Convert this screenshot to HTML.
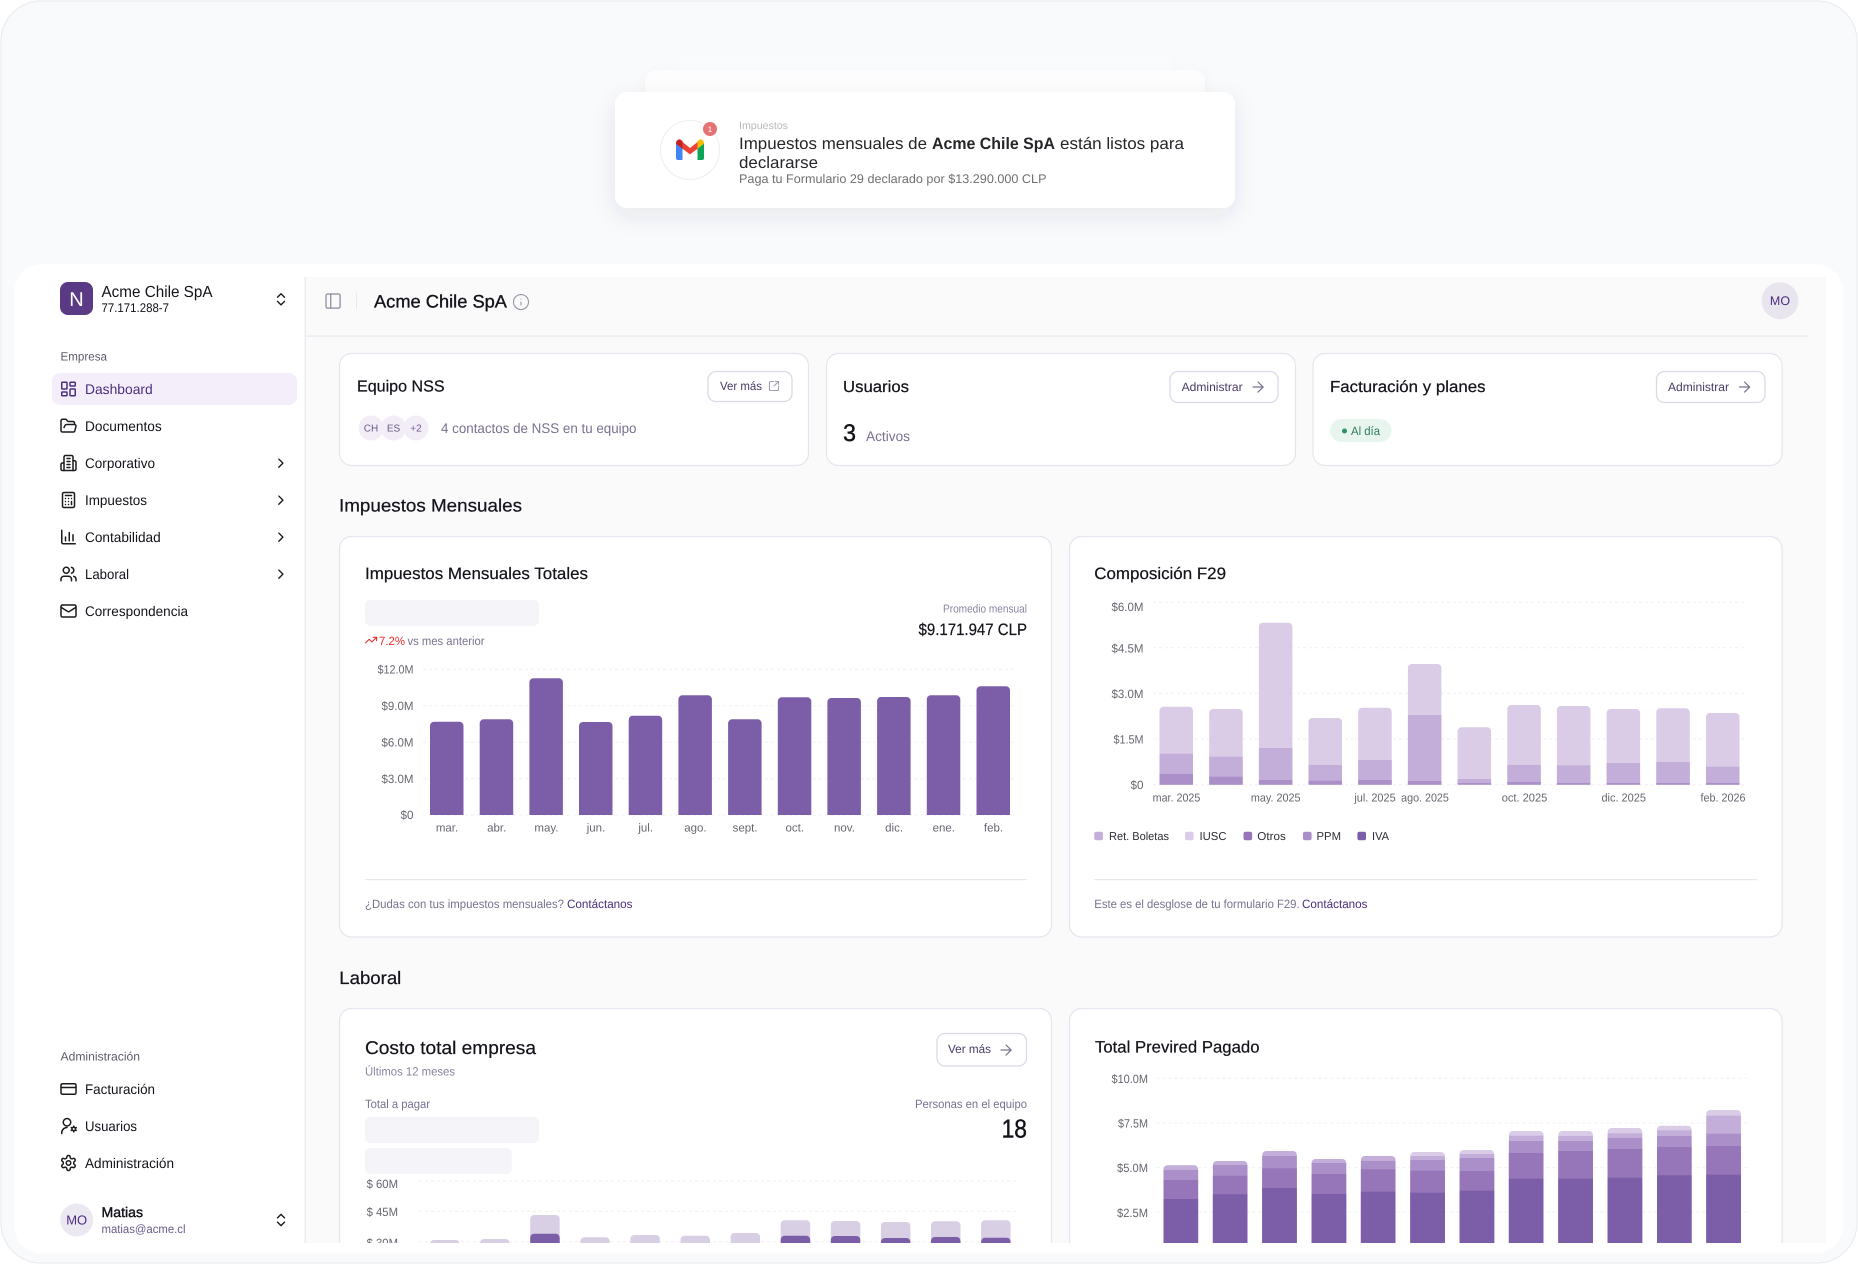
<!DOCTYPE html>
<html lang="es">
<head>
<meta charset="utf-8">
<title>Acme Chile SpA - Dashboard</title>
<style>
html,body{margin:0;padding:0;background:#fff;width:1858px;height:1264px;overflow:hidden}
svg{display:block}
text{font-family:"Liberation Sans",sans-serif;fill:#14121a}
.m{stroke:#14121a;stroke-width:.22}
.gr{fill:#7a7190}
.ax{fill:#666670}
.pu{fill:#4b2e7e}
.ic{fill:none;stroke:#1a1a1f;stroke-width:2;stroke-linecap:round;stroke-linejoin:round}
.card{fill:#fff;stroke:#e6e4ee;stroke-width:1.2}
.btn{fill:#fff;stroke:#dcd8e6;stroke-width:1.3}
.grid{stroke:#efeff4;stroke-width:1;stroke-dasharray:3 3}
.sk{fill:#f4f4f9}
</style>
</head>
<body>
<svg xmlns="http://www.w3.org/2000/svg" width="1858" height="1264" viewBox="0 0 1858 1264" text-rendering="geometricPrecision">
<defs>
<filter id="s1" x="-20%" y="-50%" width="140%" height="220%"><feDropShadow dx="0" dy="8" stdDeviation="11" flood-color="#2a2a50" flood-opacity=".09"/></filter>
<filter id="s2" x="-20%" y="-50%" width="140%" height="220%"><feDropShadow dx="0" dy="3" stdDeviation="6" flood-color="#2a2a50" flood-opacity=".03"/></filter>
<clipPath id="mc"><rect x="306" y="277" width="1520" height="966"/></clipPath>
</defs>

<!-- outer frame -->
<rect x="1" y="1" width="1856" height="1262" rx="40" fill="#f9fafc" stroke="#ebecf1" stroke-width="1.2"/>

<!-- notification stack -->
<rect x="678" y="54" width="494" height="70" rx="10" fill="#fafbfd"/>
<rect x="645" y="70" width="560" height="70" rx="11" fill="#fdfdfe" filter="url(#s2)"/>
<rect x="615" y="92" width="620" height="116" rx="12" fill="#fff" filter="url(#s1)"/>
<circle cx="690" cy="150" r="29.5" fill="#fff" stroke="#eeeeee" stroke-width="1"/>
<g transform="translate(676 139)">
<path d="M0 4V19a2 2 0 0 0 2 2H6.5V8Z" fill="#4285f4"/>
<path d="M28 4V19a2 2 0 0 1-2 2H21.5V8Z" fill="#0fa359"/>
<path d="M6.5 3 14 9 21.5 3V9.7L14 15.4 6.5 9.7Z" fill="#ea4335"/>
<path d="M0 4.5C0 .8 3.2-.7 5.4 1.2L6.5 2.1V9.7L0 4.7Z" fill="#c5221f"/>
<path d="M28 4.5C28 .8 24.8-.7 22.6 1.2L21.5 2.1V9.7L28 4.7Z" fill="#fbbc04"/>
</g>
<circle cx="710" cy="129" r="7" fill="#e57373"/>
<text x="710" y="132" font-size="8" text-anchor="middle" style="fill:#fff">1</text>
<text x="739" y="129" font-size="10.5" textLength="49" lengthAdjust="spacingAndGlyphs" style="fill:#b8b8b8">Impuestos</text>
<text x="739" y="149" font-size="16.5" textLength="188" lengthAdjust="spacingAndGlyphs" style="fill:#26262a">Impuestos mensuales de</text>
<text x="932" y="149" font-size="16.5" font-weight="700" textLength="123" lengthAdjust="spacingAndGlyphs" style="fill:#26262a">Acme Chile SpA</text>
<text x="1060" y="149" font-size="16.5" textLength="124" lengthAdjust="spacingAndGlyphs" style="fill:#26262a">están listos para</text>
<text x="739" y="168" font-size="16.5" textLength="79" lengthAdjust="spacingAndGlyphs" style="fill:#26262a">declararse</text>
<text x="739" y="183" font-size="12.5" textLength="307.5" lengthAdjust="spacingAndGlyphs" style="fill:#6f6f72">Paga tu Formulario 29 declarado por $13.290.000 CLP</text>

<!-- white panel -->
<rect x="14" y="264" width="1829" height="989.5" rx="28" fill="#fff"/>
<rect x="306" y="277" width="1520" height="966" fill="#fafafb"/>
<rect x="304.5" y="277" width="1.5" height="966" fill="#ecebf2"/>

<!-- sidebar head -->
<rect x="60" y="282" width="33" height="33" rx="8" fill="#5b3a85"/>
<text x="76.5" y="306" font-size="20" text-anchor="middle" style="fill:#fff">N</text>
<text x="101.5" y="297" font-size="16" textLength="111" lengthAdjust="spacingAndGlyphs">Acme Chile SpA</text>
<text x="101.5" y="312" font-size="12.5" textLength="67.5" lengthAdjust="spacingAndGlyphs">77.171.288-7</text>
<g class="ic" transform="translate(272.6 290.9) scale(.7)"><path d="m7 15 5 5 5-5"/><path d="m7 9 5-5 5 5"/></g>

<text x="60.5" y="360.5" font-size="12" textLength="46.5" lengthAdjust="spacingAndGlyphs" style="fill:#5f5b6b">Empresa</text>

<rect x="52" y="373" width="245" height="32" rx="8" fill="#f4eefa"/>
<g class="ic" style="stroke:#4b2e7e" transform="translate(59.5 380) scale(.75)"><rect x="3" y="3" width="7" height="9" rx="1"/><rect x="14" y="3" width="7" height="5" rx="1"/><rect x="14" y="12" width="7" height="9" rx="1"/><rect x="3" y="16" width="7" height="5" rx="1"/></g>
<text x="85" y="394" font-size="14" textLength="67.7" lengthAdjust="spacingAndGlyphs" class="pu">Dashboard</text>

<g class="ic" transform="translate(59.5 417) scale(.75)"><path d="m6 14 1.5-2.9A2 2 0 0 1 9.24 10H20a2 2 0 0 1 1.94 2.5l-1.54 6a2 2 0 0 1-1.95 1.5H4a2 2 0 0 1-2-2V5a2 2 0 0 1 2-2h3.9a2 2 0 0 1 1.69.9l.81 1.2a2 2 0 0 0 1.67.9H18a2 2 0 0 1 2 2v2"/></g>
<text x="85" y="431" font-size="14" textLength="76.7" lengthAdjust="spacingAndGlyphs">Documentos</text>

<g class="ic" transform="translate(59.5 454) scale(.75)"><path d="M6 22V4a2 2 0 0 1 2-2h8a2 2 0 0 1 2 2v18Z"/><path d="M6 12H4a2 2 0 0 0-2 2v6a2 2 0 0 0 2 2h2"/><path d="M18 9h2a2 2 0 0 1 2 2v9a2 2 0 0 1-2 2h-2"/><path d="M10 6h4"/><path d="M10 10h4"/><path d="M10 14h4"/><path d="M10 18h4"/></g>
<text x="85" y="468" font-size="14" textLength="70" lengthAdjust="spacingAndGlyphs">Corporativo</text>
<g class="ic" transform="translate(272.7 455) scale(.68)"><path d="m9 18 6-6-6-6"/></g>

<g class="ic" transform="translate(59.5 491) scale(.75)"><rect x="4" y="2" width="16" height="20" rx="2"/><path d="M8 6h8"/><path d="M16 14v4"/><path d="M16 10h.01"/><path d="M12 10h.01"/><path d="M8 10h.01"/><path d="M12 14h.01"/><path d="M8 14h.01"/><path d="M12 18h.01"/><path d="M8 18h.01"/></g>
<text x="85" y="505" font-size="14" textLength="62" lengthAdjust="spacingAndGlyphs">Impuestos</text>
<g class="ic" transform="translate(272.7 492) scale(.68)"><path d="m9 18 6-6-6-6"/></g>

<g class="ic" transform="translate(59.5 528) scale(.75)"><path d="M3 3v16a2 2 0 0 0 2 2h16"/><path d="M8 17v-5"/><path d="M13 17V6"/><path d="M18 17V9"/></g>
<text x="85" y="542" font-size="14" textLength="75.7" lengthAdjust="spacingAndGlyphs">Contabilidad</text>
<g class="ic" transform="translate(272.7 529) scale(.68)"><path d="m9 18 6-6-6-6"/></g>

<g class="ic" transform="translate(59.5 565) scale(.75)"><path d="M16 21v-2a4 4 0 0 0-4-4H6a4 4 0 0 0-4 4v2"/><circle cx="9" cy="7" r="4"/><path d="M22 21v-2a4 4 0 0 0-3-3.87"/><path d="M16 3.13a4 4 0 0 1 0 7.75"/></g>
<text x="85" y="579" font-size="14" textLength="44" lengthAdjust="spacingAndGlyphs">Laboral</text>
<g class="ic" transform="translate(272.7 566) scale(.68)"><path d="m9 18 6-6-6-6"/></g>

<g class="ic" transform="translate(59.5 602) scale(.75)"><rect x="2" y="4" width="20" height="16" rx="2"/><path d="m22 7-8.97 5.7a1.94 1.94 0 0 1-2.06 0L2 7"/></g>
<text x="85" y="616" font-size="14" textLength="103" lengthAdjust="spacingAndGlyphs">Correspondencia</text>

<text x="60.5" y="1060.7" font-size="12" textLength="79.5" lengthAdjust="spacingAndGlyphs" style="fill:#5f5b6b">Administración</text>

<g class="ic" transform="translate(59.5 1080) scale(.75)"><rect x="2" y="5" width="20" height="14" rx="2"/><line x1="2" y1="10" x2="22" y2="10"/></g>
<text x="85" y="1094" font-size="14" textLength="70" lengthAdjust="spacingAndGlyphs">Facturación</text>

<g class="ic" transform="translate(59.5 1117) scale(.75)"><path d="M3 22v-1a7 7 0 0 1 7-7"/><circle cx="10" cy="7" r="5"/><circle cx="19" cy="16" r="2.4"/><path d="M19 12.2v.6"/><path d="M19 19.2v.6"/><path d="m15.7 14.1.5.3"/><path d="m21.8 17.6.5.3"/><path d="m15.7 17.9.5-.3"/><path d="m21.8 14.4.5-.3"/></g>
<text x="85" y="1131" font-size="14" textLength="52" lengthAdjust="spacingAndGlyphs">Usuarios</text>

<g class="ic" transform="translate(59.5 1154) scale(.75)"><path d="M12.22 2h-.44a2 2 0 0 0-2 2v.18a2 2 0 0 1-1 1.73l-.43.25a2 2 0 0 1-2 0l-.15-.08a2 2 0 0 0-2.73.73l-.22.38a2 2 0 0 0 .73 2.73l.15.1a2 2 0 0 1 1 1.72v.51a2 2 0 0 1-1 1.74l-.15.09a2 2 0 0 0-.73 2.73l.22.38a2 2 0 0 0 2.73.73l.15-.08a2 2 0 0 1 2 0l.43.25a2 2 0 0 1 1 1.73V20a2 2 0 0 0 2 2h.44a2 2 0 0 0 2-2v-.18a2 2 0 0 1 1-1.73l.43-.25a2 2 0 0 1 2 0l.15.08a2 2 0 0 0 2.73-.73l.22-.39a2 2 0 0 0-.73-2.73l-.15-.08a2 2 0 0 1-1-1.74v-.5a2 2 0 0 1 1-1.74l.15-.09a2 2 0 0 0 .73-2.73l-.22-.38a2 2 0 0 0-2.73-.73l-.15.08a2 2 0 0 1-2 0l-.43-.25a2 2 0 0 1-1-1.73V4a2 2 0 0 0-2-2z"/><circle cx="12" cy="12" r="3"/></g>
<text x="85" y="1168" font-size="14" textLength="89" lengthAdjust="spacingAndGlyphs">Administración</text>

<circle cx="76.7" cy="1220" r="16.5" fill="#ece8f2"/>
<text x="76.7" y="1224.5" font-size="13" text-anchor="middle" class="pu">MO</text>
<text x="101.5" y="1217" font-size="14" textLength="41.5" lengthAdjust="spacingAndGlyphs" class="m" style="stroke-width:.4">Matias</text>
<text x="101.5" y="1233" font-size="12" textLength="84" lengthAdjust="spacingAndGlyphs" style="fill:#6b5b8a">matias@acme.cl</text>
<g class="ic" transform="translate(272.6 1211.6) scale(.7)"><path d="m7 15 5 5 5-5"/><path d="m7 9 5-5 5 5"/></g>

<!-- header -->
<g class="ic" style="stroke:#8c8a99;stroke-width:1.6" transform="translate(323.7 291.7) scale(.78)"><rect x="3" y="3" width="18" height="18" rx="2"/><path d="M9 3v18"/></g>
<rect x="356" y="293" width="1" height="16" fill="#e8e8ee"/>
<text x="374" y="307.5" font-size="18" textLength="133" lengthAdjust="spacingAndGlyphs" class="m" style="stroke-width:.35">Acme Chile SpA</text>
<g class="ic" style="stroke:#9a97a8;stroke-width:1.5" transform="translate(512 293) scale(.75)"><circle cx="12" cy="12" r="10"/><path d="M12 16v-4"/><path d="M12 8h.01"/></g>
<circle cx="1780" cy="300.7" r="18.5" fill="#e9e5ee"/>
<text x="1780" y="305" font-size="12.5" text-anchor="middle" class="pu">MO</text>
<rect x="306" y="335.5" width="1502" height="1.2" fill="#e8e6ef"/>

<g clip-path="url(#mc)">
<!-- top cards -->
<rect class="card" x="339.5" y="353.5" width="469" height="112" rx="12"/>
<rect class="card" x="826.5" y="353.5" width="469" height="112" rx="12"/>
<rect class="card" x="1313" y="353.5" width="469" height="112" rx="12"/>

<text x="357" y="391.7" font-size="16" textLength="87.6" lengthAdjust="spacingAndGlyphs" class="m">Equipo NSS</text>
<rect class="btn" x="708" y="371.5" width="84" height="30" rx="8"/>
<text x="720" y="390" font-size="12" textLength="42" lengthAdjust="spacingAndGlyphs" style="fill:#4a3b66">Ver más</text>
<g class="ic" style="stroke:#a39cb6;stroke-width:2.2" transform="translate(768 380) scale(.5)"><path d="M21 13v6a2 2 0 0 1-2 2H5a2 2 0 0 1-2-2V5a2 2 0 0 1 2-2h6"/><path d="m21 3-9 9"/><path d="M15 3h6v6"/></g>
<circle cx="371" cy="428" r="12.5" fill="#f2edf7"/><circle cx="393.5" cy="428" r="12.5" fill="#f2edf7"/><circle cx="416" cy="428" r="12.5" fill="#f2edf7"/>
<text x="371" y="431.5" font-size="10" text-anchor="middle" style="fill:#6b5b8a">CH</text>
<text x="393.5" y="431.5" font-size="10" text-anchor="middle" style="fill:#6b5b8a">ES</text>
<text x="416" y="431.5" font-size="10" text-anchor="middle" style="fill:#6b5b8a">+2</text>
<text x="441" y="433" font-size="14" textLength="195.5" lengthAdjust="spacingAndGlyphs" class="gr">4 contactos de NSS en tu equipo</text>

<text x="843" y="392" font-size="16" textLength="66" lengthAdjust="spacingAndGlyphs" class="m">Usuarios</text>
<rect class="btn" x="1170" y="371.5" width="108" height="31" rx="8"/>
<text x="1181.6" y="391" font-size="12" textLength="61" lengthAdjust="spacingAndGlyphs" style="fill:#4a3b66">Administrar</text>
<g class="ic" style="stroke:#7a7190;stroke-width:1.7" transform="translate(1249.4 378.4) scale(.72)"><path d="M5 12h14"/><path d="m12 5 7 7-7 7"/></g>
<text x="843" y="441" font-size="24" textLength="13" lengthAdjust="spacingAndGlyphs" class="m" style="stroke-width:.4">3</text>
<text x="866" y="441" font-size="14" textLength="44" lengthAdjust="spacingAndGlyphs" class="gr">Activos</text>

<text x="1330" y="392" font-size="16" textLength="155.5" lengthAdjust="spacingAndGlyphs" class="m">Facturación y planes</text>
<rect class="btn" x="1656.5" y="371.5" width="108.5" height="31" rx="8"/>
<text x="1668" y="391" font-size="12" textLength="61" lengthAdjust="spacingAndGlyphs" style="fill:#4a3b66">Administrar</text>
<g class="ic" style="stroke:#7a7190;stroke-width:1.7" transform="translate(1735.9 378.4) scale(.72)"><path d="M5 12h14"/><path d="m12 5 7 7-7 7"/></g>
<rect x="1330" y="419" width="61.5" height="23" rx="11.5" fill="#e8f5ef"/>
<circle cx="1344.5" cy="431" r="2.5" fill="#2f8f66"/>
<text x="1351" y="435" font-size="12" textLength="29" lengthAdjust="spacingAndGlyphs" style="fill:#2f7d5b">Al día</text>

<text x="339" y="511.5" font-size="18" textLength="183" lengthAdjust="spacingAndGlyphs" class="m">Impuestos Mensuales</text>

<!-- chart card 1 -->
<rect class="card" x="339.5" y="536.5" width="712" height="400.5" rx="12"/>
<text x="365" y="579" font-size="16.5" textLength="223" lengthAdjust="spacingAndGlyphs" class="m">Impuestos Mensuales Totales</text>
<rect class="sk" x="365" y="600" width="174" height="25.7" rx="5"/>
<g class="ic" style="stroke:#ef2b2b;stroke-width:2" transform="translate(364.5 633.5) scale(.55)"><path d="M22 7 13.5 15.5 8.5 10.5 2 17"/><path d="M16 7h6v6"/></g>
<text x="379" y="645" font-size="12" textLength="26" lengthAdjust="spacingAndGlyphs" style="fill:#ef2b2b">7.2%</text>
<text x="407.5" y="645" font-size="12" textLength="77" lengthAdjust="spacingAndGlyphs" class="gr">vs mes anterior</text>
<text x="943" y="612.7" font-size="11.5" textLength="84" lengthAdjust="spacingAndGlyphs" style="fill:#8a83a0">Promedio mensual</text>
<text x="918.5" y="635" font-size="16.5" textLength="108.5" lengthAdjust="spacingAndGlyphs" class="m">$9.171.947 CLP</text>

<g class="grid"><line x1="423" y1="669.3" x2="1016" y2="669.3"/><line x1="423" y1="705.7" x2="1016" y2="705.7"/><line x1="423" y1="742.3" x2="1016" y2="742.3"/><line x1="423" y1="778.7" x2="1016" y2="778.7"/><line x1="423" y1="815" x2="1016" y2="815"/></g>
<g font-size="12" text-anchor="end" class="ax">
<text x="413.5" y="673.5" class="ax" textLength="36" lengthAdjust="spacingAndGlyphs">$12.0M</text>
<text x="413.5" y="710" class="ax" textLength="32" lengthAdjust="spacingAndGlyphs">$9.0M</text>
<text x="413.5" y="746.5" class="ax" textLength="32" lengthAdjust="spacingAndGlyphs">$6.0M</text>
<text x="413.5" y="783" class="ax" textLength="32" lengthAdjust="spacingAndGlyphs">$3.0M</text>
<text x="413.5" y="819" class="ax" textLength="13" lengthAdjust="spacingAndGlyphs">$0</text>
</g>
<g fill="#7b5ea7">
<path d="M430 815V725.7a4 4 0 0 1 4-4h25.5a4 4 0 0 1 4 4V815Z"/>
<path d="M479.7 815V723.3a4 4 0 0 1 4-4h25.5a4 4 0 0 1 4 4V815Z"/>
<path d="M529.4 815V682.3a4 4 0 0 1 4-4h25.5a4 4 0 0 1 4 4V815Z"/>
<path d="M579 815V726a4 4 0 0 1 4-4h25.5a4 4 0 0 1 4 4V815Z"/>
<path d="M628.7 815V719.7a4 4 0 0 1 4-4h25.5a4 4 0 0 1 4 4V815Z"/>
<path d="M678.4 815V699.3a4 4 0 0 1 4-4h25.5a4 4 0 0 1 4 4V815Z"/>
<path d="M728.1 815V723.3a4 4 0 0 1 4-4h25.5a4 4 0 0 1 4 4V815Z"/>
<path d="M777.8 815V701.3a4 4 0 0 1 4-4h25.5a4 4 0 0 1 4 4V815Z"/>
<path d="M827.4 815V702a4 4 0 0 1 4-4h25.5a4 4 0 0 1 4 4V815Z"/>
<path d="M877.1 815V701a4 4 0 0 1 4-4h25.5a4 4 0 0 1 4 4V815Z"/>
<path d="M926.8 815V699.3a4 4 0 0 1 4-4h25.5a4 4 0 0 1 4 4V815Z"/>
<path d="M976.5 815V690.3a4 4 0 0 1 4-4h25.5a4 4 0 0 1 4 4V815Z"/>
</g>
<g font-size="11.5" text-anchor="middle">
<text x="447" y="831.7" class="ax">mar.</text><text x="496.7" y="831.7" class="ax">abr.</text><text x="546.4" y="831.7" class="ax">may.</text><text x="596" y="831.7" class="ax">jun.</text><text x="645.7" y="831.7" class="ax">jul.</text><text x="695.4" y="831.7" class="ax">ago.</text><text x="745.1" y="831.7" class="ax">sept.</text><text x="794.8" y="831.7" class="ax">oct.</text><text x="844.4" y="831.7" class="ax">nov.</text><text x="894.1" y="831.7" class="ax">dic.</text><text x="943.8" y="831.7" class="ax">ene.</text><text x="993.5" y="831.7" class="ax">feb.</text>
</g>
<rect x="365" y="879" width="662" height="1.2" fill="#e8e7ee"/>
<text x="365" y="908" font-size="12" textLength="199" lengthAdjust="spacingAndGlyphs" class="gr">¿Dudas con tus impuestos mensuales?</text>
<text x="567" y="908" font-size="12" textLength="65.5" lengthAdjust="spacingAndGlyphs" class="pu">Contáctanos</text>

<!-- chart card 2 -->
<rect class="card" x="1069.5" y="536.5" width="712.5" height="400.5" rx="12"/>
<text x="1094.3" y="579" font-size="16.5" textLength="131.7" lengthAdjust="spacingAndGlyphs" class="m">Composición F29</text>
<g class="grid"><line x1="1153" y1="602.3" x2="1746" y2="602.3"/><line x1="1153" y1="647.7" x2="1746" y2="647.7"/><line x1="1153" y1="693.3" x2="1746" y2="693.3"/><line x1="1153" y1="739" x2="1746" y2="739"/><line x1="1153" y1="784.7" x2="1746" y2="784.7"/></g>
<g font-size="12" text-anchor="end">
<text x="1143.5" y="611" class="ax" textLength="32" lengthAdjust="spacingAndGlyphs">$6.0M</text>
<text x="1143.5" y="652.3" class="ax" textLength="32" lengthAdjust="spacingAndGlyphs">$4.5M</text>
<text x="1143.5" y="698" class="ax" textLength="32" lengthAdjust="spacingAndGlyphs">$3.0M</text>
<text x="1143.5" y="743.3" class="ax" textLength="30" lengthAdjust="spacingAndGlyphs">$1.5M</text>
<text x="1143.5" y="789" class="ax" textLength="13" lengthAdjust="spacingAndGlyphs">$0</text>
</g>
<g fill="#dacbe7">
<path d="M1159.5 784.7V710.7a4 4 0 0 1 4-4h25.5a4 4 0 0 1 4 4V784.7Z"/>
<path d="M1209.2 784.7V713a4 4 0 0 1 4-4h25.5a4 4 0 0 1 4 4V784.7Z"/>
<path d="M1258.9 784.7V626.7a4 4 0 0 1 4-4h25.5a4 4 0 0 1 4 4V784.7Z"/>
<path d="M1308.5 784.7V722a4 4 0 0 1 4-4h25.5a4 4 0 0 1 4 4V784.7Z"/>
<path d="M1358.2 784.7V711.7a4 4 0 0 1 4-4h25.5a4 4 0 0 1 4 4V784.7Z"/>
<path d="M1407.9 784.7V668a4 4 0 0 1 4-4h25.5a4 4 0 0 1 4 4V784.7Z"/>
<path d="M1457.6 784.7V731.3a4 4 0 0 1 4-4h25.5a4 4 0 0 1 4 4V784.7Z"/>
<path d="M1507.3 784.7V709a4 4 0 0 1 4-4h25.5a4 4 0 0 1 4 4V784.7Z"/>
<path d="M1556.9 784.7V710a4 4 0 0 1 4-4h25.5a4 4 0 0 1 4 4V784.7Z"/>
<path d="M1606.6 784.7V713a4 4 0 0 1 4-4h25.5a4 4 0 0 1 4 4V784.7Z"/>
<path d="M1656.3 784.7V712.3a4 4 0 0 1 4-4h25.5a4 4 0 0 1 4 4V784.7Z"/>
<path d="M1706 784.7V717a4 4 0 0 1 4-4h25.5a4 4 0 0 1 4 4V784.7Z"/>
</g>
<g fill="#c3aed9">
<rect x="1159.5" y="753.7" width="33.5" height="31"/>
<rect x="1209.2" y="756.7" width="33.5" height="28"/>
<rect x="1258.9" y="748" width="33.5" height="36.7"/>
<rect x="1308.5" y="765" width="33.5" height="19.7"/>
<rect x="1358.2" y="760" width="33.5" height="24.7"/>
<rect x="1407.9" y="715" width="33.5" height="69.7"/>
<rect x="1457.6" y="779" width="33.5" height="5.7"/>
<rect x="1507.3" y="765" width="33.5" height="19.7"/>
<rect x="1556.9" y="765.3" width="33.5" height="19.4"/>
<rect x="1606.6" y="763" width="33.5" height="21.7"/>
<rect x="1656.3" y="762" width="33.5" height="22.7"/>
<rect x="1706" y="766.7" width="33.5" height="18"/>
</g>
<g fill="#ab8fc9">
<rect x="1159.5" y="774" width="33.5" height="10.7"/>
<rect x="1209.2" y="776.7" width="33.5" height="8"/>
<rect x="1258.9" y="780" width="33.5" height="4.7"/>
<rect x="1308.5" y="780.7" width="33.5" height="4"/>
<rect x="1358.2" y="780" width="33.5" height="4.7"/>
<rect x="1407.9" y="781" width="33.5" height="3.7"/>
<rect x="1457.6" y="783" width="33.5" height="1.7"/>
<rect x="1507.3" y="782" width="33.5" height="2.7"/>
<rect x="1556.9" y="783" width="33.5" height="1.7"/>
<rect x="1606.6" y="783" width="33.5" height="1.7"/>
<rect x="1656.3" y="783" width="33.5" height="1.7"/>
<rect x="1706" y="783" width="33.5" height="1.7"/>
</g>
<g font-size="11.5" text-anchor="middle">
<text x="1176.5" y="801.7" class="ax" textLength="47.7" lengthAdjust="spacingAndGlyphs">mar. 2025</text>
<text x="1275.7" y="801.7" class="ax" textLength="49.6" lengthAdjust="spacingAndGlyphs">may. 2025</text>
<text x="1375" y="801.7" class="ax" textLength="41.3" lengthAdjust="spacingAndGlyphs">jul. 2025</text>
<text x="1425" y="801.7" class="ax" textLength="47.7" lengthAdjust="spacingAndGlyphs">ago. 2025</text>
<text x="1524.5" y="801.7" class="ax" textLength="45.5" lengthAdjust="spacingAndGlyphs">oct. 2025</text>
<text x="1623.7" y="801.7" class="ax" textLength="44.5" lengthAdjust="spacingAndGlyphs">dic. 2025</text>
<text x="1723" y="801.7" class="ax" textLength="45" lengthAdjust="spacingAndGlyphs">feb. 2026</text>
</g>
<rect x="1094.3" y="831.7" width="8.6" height="8.6" rx="2" fill="#c3aed9"/>
<text x="1109" y="840" font-size="11.5" textLength="60" lengthAdjust="spacingAndGlyphs" style="fill:#2e2c36">Ret. Boletas</text>
<rect x="1185" y="831.7" width="8.6" height="8.6" rx="2" fill="#dacbe7"/>
<text x="1199.5" y="840" font-size="11.5" textLength="27" lengthAdjust="spacingAndGlyphs" style="fill:#2e2c36">IUSC</text>
<rect x="1243.5" y="831.7" width="8.6" height="8.6" rx="2" fill="#9676b8"/>
<text x="1257.3" y="840" font-size="11.5" textLength="28.5" lengthAdjust="spacingAndGlyphs" style="fill:#2e2c36">Otros</text>
<rect x="1303" y="831.7" width="8.6" height="8.6" rx="2" fill="#ab8fc9"/>
<text x="1316.5" y="840" font-size="11.5" textLength="24.5" lengthAdjust="spacingAndGlyphs" style="fill:#2e2c36">PPM</text>
<rect x="1357.4" y="831.7" width="8.6" height="8.6" rx="2" fill="#7b5ea7"/>
<text x="1372" y="840" font-size="11.5" textLength="17" lengthAdjust="spacingAndGlyphs" style="fill:#2e2c36">IVA</text>
<rect x="1094.3" y="879" width="662.7" height="1.2" fill="#e8e7ee"/>
<text x="1094.3" y="908" font-size="12" textLength="205.3" lengthAdjust="spacingAndGlyphs" class="gr">Este es el desglose de tu formulario F29.</text>
<text x="1302" y="908" font-size="12" textLength="65.5" lengthAdjust="spacingAndGlyphs" class="pu">Contáctanos</text>

<text x="339.3" y="984" font-size="18" textLength="62" lengthAdjust="spacingAndGlyphs" class="m">Laboral</text>

<!-- card 3 -->
<rect class="card" x="339.5" y="1008.5" width="712" height="300" rx="12"/>
<text x="365" y="1054" font-size="18.5" textLength="171" lengthAdjust="spacingAndGlyphs" class="m">Costo total empresa</text>
<text x="365" y="1075.7" font-size="12" textLength="90" lengthAdjust="spacingAndGlyphs" style="fill:#8a83a0">Últimos 12 meses</text>
<rect class="btn" x="937" y="1033.5" width="89.5" height="32.5" rx="8"/>
<text x="948" y="1053" font-size="12" textLength="43" lengthAdjust="spacingAndGlyphs" style="fill:#4a3b66">Ver más</text>
<g class="ic" style="stroke:#7a7190;stroke-width:1.7" transform="translate(997.4 1041.4) scale(.72)"><path d="M5 12h14"/><path d="m12 5 7 7-7 7"/></g>
<text x="365" y="1108" font-size="12" textLength="65" lengthAdjust="spacingAndGlyphs" class="gr">Total a pagar</text>
<rect class="sk" x="365" y="1117" width="174" height="26" rx="5"/>
<rect class="sk" x="365" y="1148" width="146.7" height="26" rx="5"/>
<text x="915" y="1108" font-size="12" textLength="112" lengthAdjust="spacingAndGlyphs" class="gr">Personas en el equipo</text>
<text x="1001.6" y="1137.3" font-size="26" textLength="25.4" lengthAdjust="spacingAndGlyphs" class="m" style="stroke-width:.4">18</text>
<g class="grid"><line x1="419" y1="1181" x2="1018.6" y2="1181"/><line x1="419" y1="1211.3" x2="1018.6" y2="1211.3"/><line x1="419" y1="1241.7" x2="1018.6" y2="1241.7"/></g>
<text x="366.6" y="1188" font-size="12" textLength="31.4" lengthAdjust="spacingAndGlyphs" class="ax">$ 60M</text>
<text x="366.6" y="1216" font-size="12" textLength="31.4" lengthAdjust="spacingAndGlyphs" class="ax">$ 45M</text>
<text x="366.6" y="1247" font-size="12" textLength="31.4" lengthAdjust="spacingAndGlyphs" class="ax">$ 30M</text>
<g fill="#d8cfe5">
<rect x="430" y="1240" width="29.5" height="30" rx="4"/>
<rect x="480.1" y="1239" width="29.5" height="30" rx="4"/>
<rect x="530.2" y="1215" width="29.5" height="50" rx="4"/>
<rect x="580.3" y="1237.3" width="29.5" height="30" rx="4"/>
<rect x="630.4" y="1235" width="29.5" height="30" rx="4"/>
<rect x="680.5" y="1235.7" width="29.5" height="30" rx="4"/>
<rect x="730.6" y="1233" width="29.5" height="30" rx="4"/>
<rect x="780.7" y="1220.3" width="29.5" height="40" rx="4"/>
<rect x="830.8" y="1221" width="29.5" height="40" rx="4"/>
<rect x="880.9" y="1222" width="29.5" height="40" rx="4"/>
<rect x="931" y="1221.3" width="29.5" height="40" rx="4"/>
<rect x="981.1" y="1220.3" width="29.5" height="40" rx="4"/>
</g>
<g fill="#7b5ea7">
<rect x="530.2" y="1233.7" width="29.5" height="30" rx="4"/>
<rect x="780.7" y="1235.7" width="29.5" height="30" rx="4"/>
<rect x="830.8" y="1236" width="29.5" height="30" rx="4"/>
<rect x="880.9" y="1238" width="29.5" height="30" rx="4"/>
<rect x="931" y="1237" width="29.5" height="30" rx="4"/>
<rect x="981.1" y="1237.7" width="29.5" height="30" rx="4"/>
</g>

<!-- card 4 -->
<rect class="card" x="1069.5" y="1008.5" width="712.5" height="300" rx="12"/>
<text x="1095" y="1052.5" font-size="16.5" textLength="164.5" lengthAdjust="spacingAndGlyphs" class="m">Total Previred Pagado</text>
<g class="grid"><line x1="1156.4" y1="1078.3" x2="1748.4" y2="1078.3"/><line x1="1156.4" y1="1123" x2="1748.4" y2="1123"/><line x1="1156.4" y1="1167.7" x2="1748.4" y2="1167.7"/><line x1="1156.4" y1="1212" x2="1748.4" y2="1212"/></g>
<g font-size="12" text-anchor="end">
<text x="1148" y="1083" class="ax" textLength="36.5" lengthAdjust="spacingAndGlyphs">$10.0M</text>
<text x="1148" y="1127.5" class="ax" textLength="30" lengthAdjust="spacingAndGlyphs">$7.5M</text>
<text x="1148" y="1172" class="ax" textLength="31" lengthAdjust="spacingAndGlyphs">$5.0M</text>
<text x="1148" y="1217" class="ax" textLength="31" lengthAdjust="spacingAndGlyphs">$2.5M</text>
</g>
<g fill="#dacbe7">
<path d="M1410.3 1243V1156a4 4 0 0 1 4-4h26.6a4 4 0 0 1 4 4V1243Z"/>
<path d="M1459.6 1243V1154a4 4 0 0 1 4-4h26.6a4 4 0 0 1 4 4V1243Z"/>
<path d="M1508.9 1243V1135a4 4 0 0 1 4-4h26.6a4 4 0 0 1 4 4V1243Z"/>
<path d="M1558.3 1243V1135a4 4 0 0 1 4-4h26.6a4 4 0 0 1 4 4V1243Z"/>
<path d="M1607.6 1243V1132a4 4 0 0 1 4-4h26.6a4 4 0 0 1 4 4V1243Z"/>
<path d="M1657 1243V1129.7a4 4 0 0 1 4-4h26.6a4 4 0 0 1 4 4V1243Z"/>
<path d="M1706.3 1243V1114a4 4 0 0 1 4-4h26.6a4 4 0 0 1 4 4V1243Z"/>
</g>
<g fill="#c3aed9">
<path d="M1163.5 1243V1169.3a4 4 0 0 1 4-4h26.6a4 4 0 0 1 4 4V1243Z"/>
<path d="M1212.9 1243V1165a4 4 0 0 1 4-4h26.6a4 4 0 0 1 4 4V1243Z"/>
<path d="M1262.2 1243V1155a4 4 0 0 1 4-4h26.6a4 4 0 0 1 4 4V1243Z"/>
<path d="M1311.6 1243V1163a4 4 0 0 1 4-4h26.6a4 4 0 0 1 4 4V1243Z"/>
<path d="M1360.9 1243V1160a4 4 0 0 1 4-4h26.6a4 4 0 0 1 4 4V1243Z"/>
<rect x="1410.3" y="1156" width="34.6" height="87"/>
<rect x="1459.6" y="1154" width="34.6" height="89"/>
<rect x="1508.9" y="1135.7" width="34.6" height="107.3"/>
<rect x="1558.3" y="1136" width="34.6" height="107"/>
<rect x="1607.6" y="1133.3" width="34.6" height="109.7"/>
<rect x="1657" y="1130.3" width="34.6" height="112.7"/>
<rect x="1706.3" y="1115.7" width="34.6" height="127.3"/>
</g>
<g fill="#ab8fc9">
<rect x="1163.5" y="1170" width="34.6" height="73"/>
<rect x="1212.9" y="1165" width="34.6" height="78"/>
<rect x="1262.2" y="1156" width="34.6" height="87"/>
<rect x="1311.6" y="1163" width="34.6" height="80"/>
<rect x="1360.9" y="1161" width="34.6" height="82"/>
<rect x="1410.3" y="1160" width="34.6" height="83"/>
<rect x="1459.6" y="1158" width="34.6" height="85"/>
<rect x="1508.9" y="1141" width="34.6" height="102"/>
<rect x="1558.3" y="1141" width="34.6" height="102"/>
<rect x="1607.6" y="1138" width="34.6" height="105"/>
<rect x="1657" y="1136" width="34.6" height="107"/>
<rect x="1706.3" y="1133.7" width="34.6" height="109.3"/>
</g>
<g fill="#9676b8">
<rect x="1163.5" y="1180" width="34.6" height="63"/>
<rect x="1212.9" y="1175.7" width="34.6" height="67.3"/>
<rect x="1262.2" y="1168.3" width="34.6" height="74.7"/>
<rect x="1311.6" y="1174" width="34.6" height="69"/>
<rect x="1360.9" y="1169.3" width="34.6" height="73.7"/>
<rect x="1410.3" y="1170.7" width="34.6" height="72.3"/>
<rect x="1459.6" y="1171" width="34.6" height="72"/>
<rect x="1508.9" y="1153" width="34.6" height="90"/>
<rect x="1558.3" y="1151" width="34.6" height="92"/>
<rect x="1607.6" y="1149" width="34.6" height="94"/>
<rect x="1657" y="1147" width="34.6" height="96"/>
<rect x="1706.3" y="1146" width="34.6" height="97"/>
</g>
<g fill="#7b5ea7">
<rect x="1163.5" y="1199" width="34.6" height="44"/>
<rect x="1212.9" y="1194.3" width="34.6" height="48.7"/>
<rect x="1262.2" y="1188" width="34.6" height="55"/>
<rect x="1311.6" y="1194" width="34.6" height="49"/>
<rect x="1360.9" y="1191.7" width="34.6" height="51.3"/>
<rect x="1410.3" y="1192.7" width="34.6" height="50.3"/>
<rect x="1459.6" y="1190.7" width="34.6" height="52.3"/>
<rect x="1508.9" y="1178.7" width="34.6" height="64.3"/>
<rect x="1558.3" y="1178.7" width="34.6" height="64.3"/>
<rect x="1607.6" y="1177.7" width="34.6" height="65.3"/>
<rect x="1657" y="1175.3" width="34.6" height="67.7"/>
<rect x="1706.3" y="1174.7" width="34.6" height="68.3"/>
</g>
</g>
</svg>
</body>
</html>
